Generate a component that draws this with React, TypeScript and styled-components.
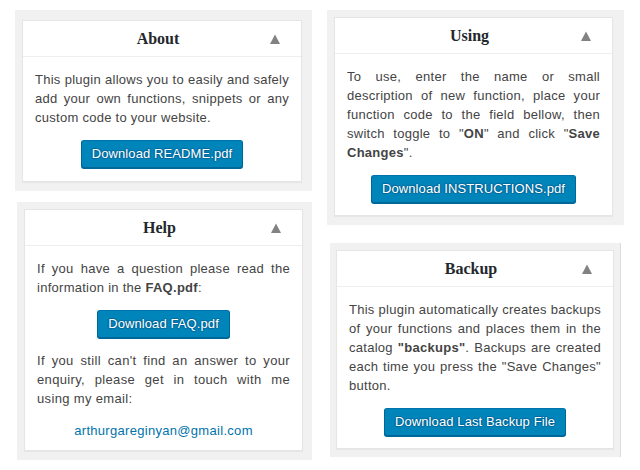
import React from "react";
import styled, { createGlobalStyle } from "styled-components";

const Global = createGlobalStyle`
  html, body { margin: 0; padding: 0; background: #fff; }
  body { font-family: "Liberation Sans", Arial, sans-serif; font-size: 13px; color: #444; }
`;

const Page = styled.div`
  display: flex;
  align-items: flex-start;
  gap: 15px;
  padding: 10px 0 0 15px;
`;

const Column = styled.div`
  display: flex;
  flex-direction: column;
  width: 297px;
`;

const Backdrop = styled.div<{ $pad: string; $mt?: number; $ml?: number; $w: number; $edge?: boolean }>`
  box-sizing: border-box;
  width: ${(p) => p.$w}px;
  margin-top: ${(p) => p.$mt ?? 0}px;
  margin-left: ${(p) => p.$ml ?? 0}px;
  padding: ${(p) => p.$pad};
  background: #f1f1f1;
  border-right: ${(p) => (p.$edge ? "1px solid #dcdcdc" : "none")};
`;

const Card = styled.div`
  background: #fff;
  border: 1px solid #e5e5e5;
  box-shadow: 0 1px 1px rgba(0, 0, 0, 0.04);
`;

const Header = styled.div`
  display: grid;
  grid-template-columns: 23px 1fr 31px;
  align-items: center;
  height: 35px;
  border-bottom: 1px solid #eee;
`;

const Title = styled.h2`
  margin: 0;
  text-align: center;
  font-family: "Liberation Serif", "Times New Roman", serif;
  font-weight: bold;
  font-size: 16px;
  color: #23282d;
`;

const Toggle = styled.svg`
  display: block;
  width: 10px;
  height: 10px;
  fill: #828282;
`;

const Body = styled.div`
  padding: 0 12px;
`;

const Text = styled.p<{ $loose?: boolean }>`
  margin: 13px 0;
  line-height: 19px;
  letter-spacing: ${(p) => (p.$loose ? 0.35 : 0.27)}px;
  text-align: justify;
`;

const ButtonRow = styled.div<{ $mb?: number }>`
  display: flex;
  justify-content: center;
  margin: 0 0 ${(p) => p.$mb ?? 12}px;
`;

const Button = styled.a`
  box-sizing: border-box;
  display: inline-block;
  height: 28px;
  line-height: 26px;
  padding: 0 10px 1px;
  font-size: 13px;
  letter-spacing: 0.1px;
  color: #fff;
  text-decoration: none;
  background: #0085ba;
  border: 1px solid;
  border-color: #0073aa #006799 #006799;
  border-radius: 3px;
  box-shadow: 0 1px 0 #006799;
  text-shadow: 0 -1px 1px #006799, 1px 0 1px #006799, 0 1px 1px #006799, -1px 0 1px #006799;
  white-space: nowrap;
`;

const Email = styled.a`
  display: block;
  margin: 12px 0 10px;
  text-align: center;
  line-height: 19px;
  letter-spacing: 0.3px;
  color: #0073aa;
  text-decoration: none;
`;

const Arrow = () => (
  <Toggle viewBox="0 0 10 10">
    <polygon points="5,0.5 10,10 0,10" />
  </Toggle>
);

const Box: React.FC<{ title: string; children: React.ReactNode }> = ({ title, children }) => (
  <Card>
    <Header>
      <span />
      <Title>{title}</Title>
      <Arrow />
    </Header>
    <Body>{children}</Body>
  </Card>
);

export default function App() {
  return (
    <>
      <Global />
      <Page>
        <Column>
          <Backdrop $w={297} $pad="10px 10px 9px 7px">
            <Box title="About">
              <Text>
                This plugin allows you to easily and safely add your own functions, snippets or any
                custom code to your website.
              </Text>
              <ButtonRow $mb={13}>
                <Button>Download README.pdf</Button>
              </ButtonRow>
            </Box>
          </Backdrop>
          <Backdrop $w={295} $mt={11} $ml={2} $pad="7px 9px 9px 7px">
            <Box title="Help">
              <Text>
                If you have a question please read the information in the <b>FAQ.pdf</b>:
              </Text>
              <ButtonRow $mb={0}>
                <Button>Download FAQ.pdf</Button>
              </ButtonRow>
              <Text $loose>
                If you still can't find an answer to your enquiry, please get in touch with me using
                my email:
              </Text>
              <Email>arthurgareginyan@gmail.com</Email>
            </Box>
          </Backdrop>
        </Column>
        <Column>
          <Backdrop $w={297} $pad="7px 11px 9px 7px">
            <Box title="Using">
              <Text>
                To use, enter the name or small description of new function, place your function code
                to the field bellow, then switch toggle to "<b>ON</b>" and click "<b>Save Changes</b>".
              </Text>
              <ButtonRow>
                <Button>Download INSTRUCTIONS.pdf</Button>
              </ButtonRow>
            </Box>
          </Backdrop>
          <Backdrop $w={291} $mt={18} $ml={3} $pad="7px 6px 8px 6px" $edge>
            <Box title="Backup">
              <Text>
                This plugin automatically creates backups of your functions and places them in the
                catalog <b>"backups"</b>. Backups are created each time you press the "Save Changes"
                button.
              </Text>
              <ButtonRow>
                <Button>Download Last Backup File</Button>
              </ButtonRow>
            </Box>
          </Backdrop>
        </Column>
      </Page>
    </>
  );
}
